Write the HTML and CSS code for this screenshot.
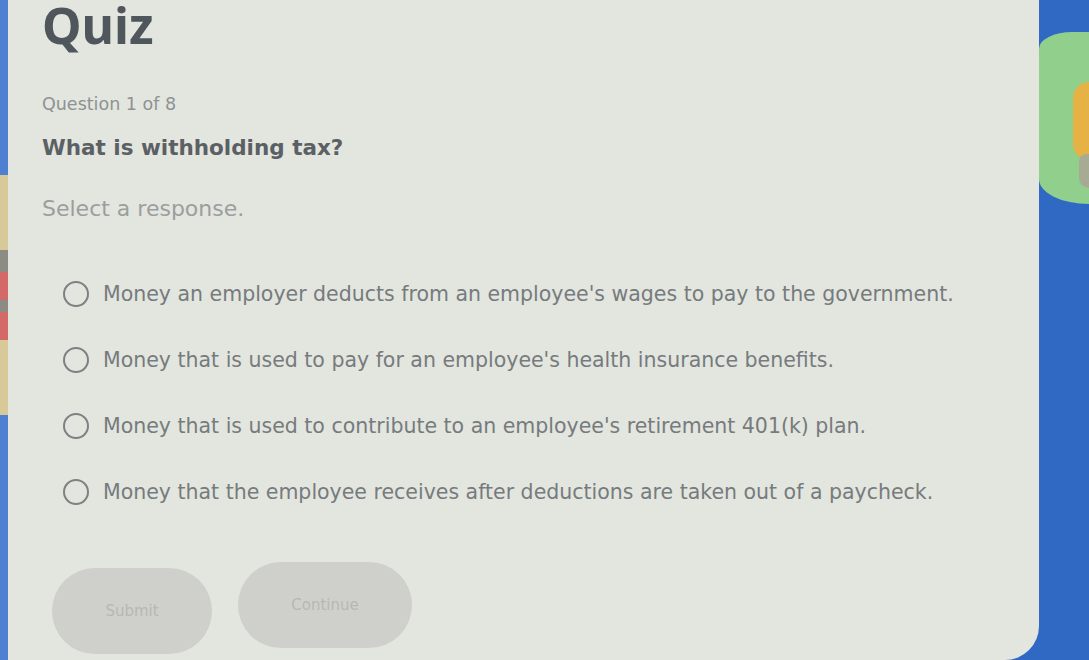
FILE: index.html
```html
<!DOCTYPE html>
<html>
<head>
<meta charset="utf-8">
<link rel="stylesheet" href="styles.css">
</head>
<body>
<div class="screen">
  <div class="strip">
    <div class="seg blue tall"></div>
    <div class="seg yellow"></div>
    <div class="seg gray"></div>
    <div class="seg red"></div>
    <div class="seg gray short"></div>
    <div class="seg red"></div>
    <div class="seg yellow"></div>
    <div class="seg blue fill"></div>
  </div>
  <main class="panel">
    <h1 class="title">Quiz</h1>
    <div class="counter">Question 1 of 8</div>
    <h2 class="question">What is withholding tax?</h2>
    <div class="prompt">Select a response.</div>
    <ul class="options">
      <li class="option"><span class="radio"></span><span class="label">Money an employer deducts from an employee's wages to pay to the government.</span></li>
      <li class="option"><span class="radio"></span><span class="label">Money that is used to pay for an employee's health insurance benefits.</span></li>
      <li class="option"><span class="radio"></span><span class="label">Money that is used to contribute to an employee's retirement 401(k) plan.</span></li>
      <li class="option"><span class="radio"></span><span class="label">Money that the employee receives after deductions are taken out of a paycheck.</span></li>
    </ul>
    <div class="actions">
      <button class="btn submit">Submit</button>
      <button class="btn continue">Continue</button>
    </div>
  </main>
  <aside class="side">
    <div class="blob">
      <div class="sun"></div>
      <div class="rock"></div>
    </div>
  </aside>
</div>
</body>
</html>
```
FILE: styles.css
```css
html, body {
  margin: 0;
  padding: 0;
  height: 100%;
  background: #2f69c4;
}
.screen {
  display: grid;
  grid-template-columns: 8px 1fr 50px;
  height: 660px;
  overflow: hidden;
  font-family: "DejaVu Sans", "Noto Sans", sans-serif;
}
.strip {
  display: flex;
  flex-direction: column;
  background: #4f7fcf;
}
.seg { height: 22px; }
.seg.tall { height: 175px; background: #5683cf; }
.seg.blue { background: #4f7fd0; }
.seg.yellow { height: 75px; background: #d8ca98; }
.seg.gray { background: #8d8c84; }
.seg.short { height: 12px; }
.seg.red { height: 28px; background: #d36a68; }
.seg.fill { flex: 1; }

.panel {
  background: #e3e5df;
  border-radius: 0 0 34px 0;
  padding: 0 0 0 34px;
  color: #6d7275;
}
.title {
  margin: 0;
  font-family: "Noto Sans", sans-serif;
  font-size: 50px;
  line-height: 50px;
  font-weight: 700;
  color: #4f575c;
}
.counter {
  margin-top: 44px;
  font-size: 17.5px;
  line-height: 20px;
  color: #8e9292;
}
.question {
  margin: 21px 0 0 0;
  font-size: 21.5px;
  line-height: 26px;
  font-weight: 700;
  color: #5a6064;
}
.prompt {
  margin-top: 35px;
  font-size: 22px;
  line-height: 26px;
  color: #9b9e9d;
}
.options {
  list-style: none;
  margin: 58px 0 0 0;
  padding: 0 0 0 21px;
  display: flex;
  flex-direction: column;
  gap: 38px;
}
.option {
  display: flex;
  align-items: center;
  gap: 14px;
  height: 28px;
}
.radio {
  width: 22px;
  height: 22px;
  border: 2px solid #7c8182;
  border-radius: 50%;
  flex: none;
}
.label {
  font-size: 20.5px;
  line-height: 24px;
  color: #767b7d;
}
.actions {
  display: flex;
  gap: 26px;
  margin-top: 56px;
  padding-left: 10px;
}
.btn {
  font-family: inherit;
  border: none;
  border-radius: 44px;
  background: #cfd0cb;
  color: #b7b8b2;
  font-size: 15px;
}
.submit { width: 160px; height: 86px; margin-top: 6px; }
.continue { width: 174px; height: 86px; }

.side {
  background: #2f69c4;
  display: flex;
  flex-direction: column;
  padding-top: 32px;
}
.blob {
  box-sizing: border-box;
  height: 172px;
  background: #90cf8c;
  border-radius: 40px 0 0 60px / 20px 0 0 30px;
  display: flex;
  flex-direction: column;
  align-items: flex-end;
  padding-top: 50px;
}
.sun {
  width: 16px;
  height: 78px;
  background: #e6b246;
  border-radius: 40px 0 0 40px;
}
.rock {
  width: 10px;
  height: 34px;
  margin-top: -6px;
  background: #a7ab93;
  border-radius: 10px 0 0 14px;
}
```
